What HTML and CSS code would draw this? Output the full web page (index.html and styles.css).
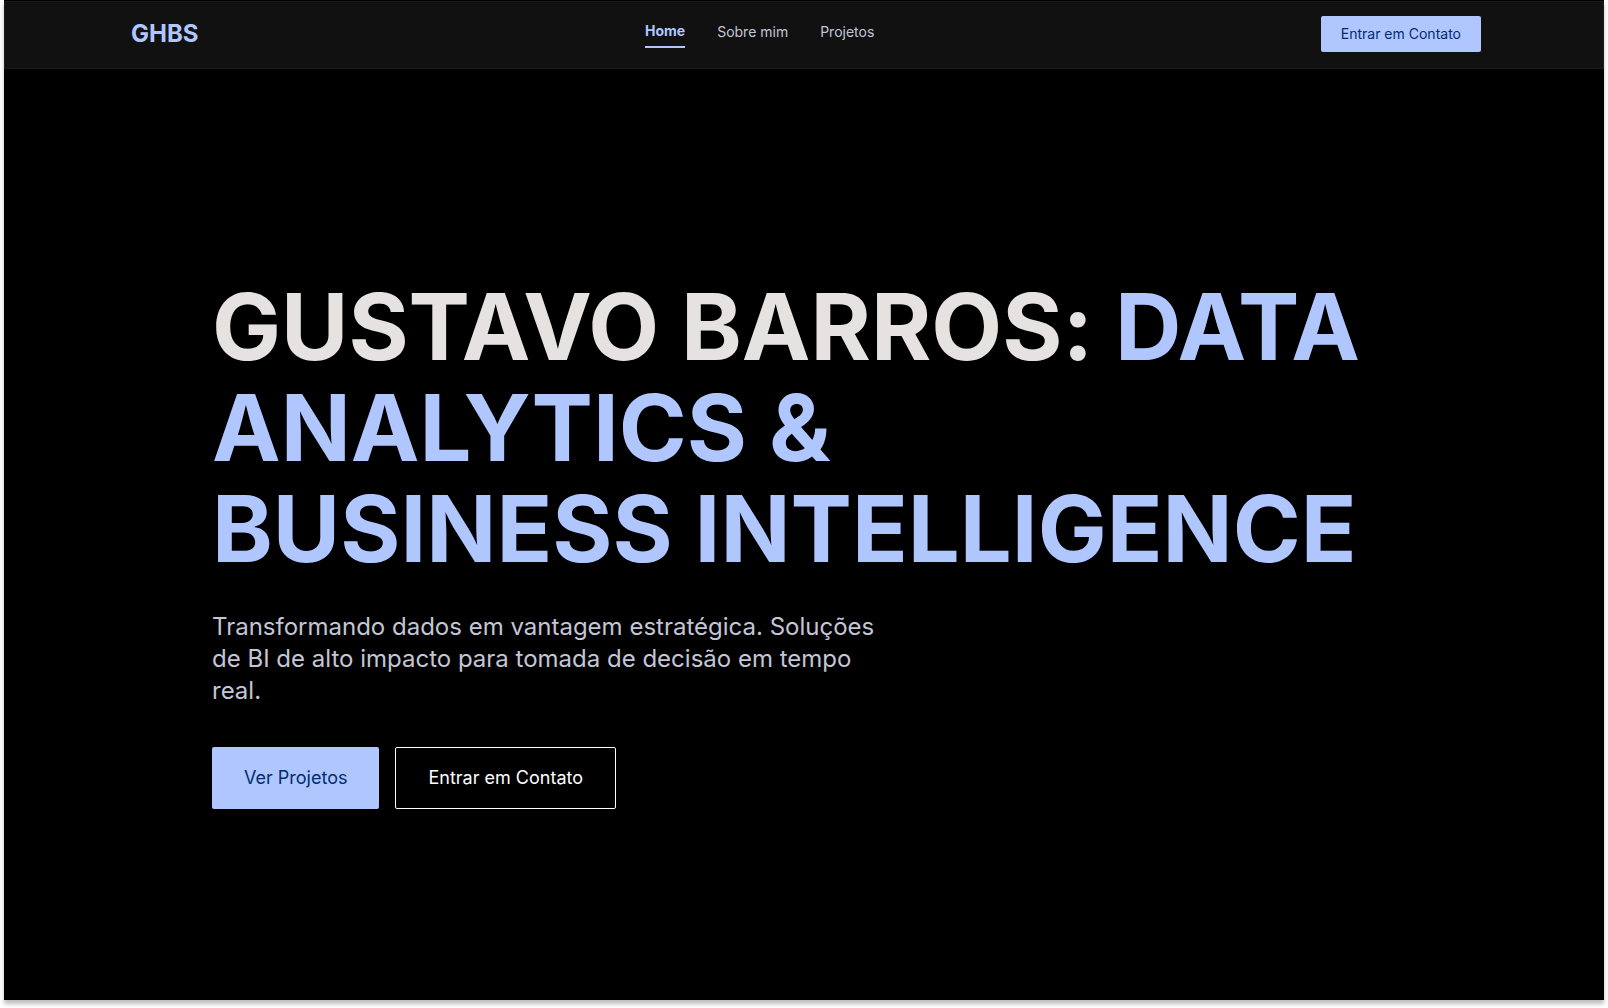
FILE: index.html
```html
<!DOCTYPE html>
<html lang="pt-BR">
<head>
    <meta charset="UTF-8">
    <meta name="viewport" content="width=device-width, initial-scale=1.0">
    <title>GHBS - Gustavo Barros</title>
    <link rel="stylesheet" href="styles.css">
</head>
<body>
    <div class="page">
        <!-- Header -->
        <header class="header">
            <a class="logo" href="#home">GHBS</a>
            <nav class="nav">
                <a class="active" href="#home">Home</a>
                <a href="#sobre">Sobre mim</a>
                <a href="#projetos">Projetos</a>
            </nav>
            <button class="btn btn-small" type="button">Entrar em Contato</button>
        </header>

        <!-- Hero -->
        <main class="hero" id="home">
            <h1>GUSTAVO BARROS: <span>DATA<br>ANALYTICS &amp;<br>BUSINESS INTELLIGENCE</span></h1>
            <p>Transformando dados em vantagem estratégica. Soluções de BI de alto impacto para tomada de decisão em tempo real.</p>
            <div class="actions">
                <button class="btn" type="button">Ver Projetos</button>
                <button class="btn btn-outline" type="button">Entrar em Contato</button>
            </div>
        </main>
    </div>
</body>
</html>
```
FILE: styles.css
```css
* {
    box-sizing: border-box;
}

body {
    font-family: Inter, "Liberation Sans", sans-serif;
    margin: 0;
    padding: 0 4px 8px;
    min-height: 100vh;
    display: flex;
    background-color: #fff;
    color: #e5e2e1;
}

.page {
    flex: 1;
    display: flex;
    flex-direction: column;
    padding-top: 1px;
    background-color: #000;
    box-shadow: 0 4px 4px rgba(0, 0, 0, 0.25);
}

/* Header */
.header {
    display: flex;
    justify-content: space-between;
    align-items: flex-start;
    padding: 14px 122px 16px 126px;
    background-color: #111;
    border: 1px solid #1a1a1a;
}

.logo {
    color: #b0c6ff;
    font-size: 24px;
    font-weight: 700;
    line-height: 36px;
    text-decoration: none;
}

.nav {
    display: flex;
    gap: 32px;
}

.nav a {
    color: #c3c6d6;
    font-size: 14px;
    line-height: 32px;
    text-decoration: none;
}

.nav .active {
    color: #b0c6ff;
    font-weight: 700;
    line-height: 30px;
    border-bottom: 2px solid #b0c6ff;
}

/* Buttons */
.btn {
    padding: 16px 32px;
    font-family: inherit;
    font-size: 18px;
    line-height: 28px;
    color: #002d6f;
    background-color: #b0c6ff;
    border: none;
    border-radius: 2px;
    cursor: pointer;
}

.btn-small {
    padding: 9px 20px;
    font-size: 14px;
    line-height: 18px;
}

.btn-outline {
    color: #fff;
    background-color: transparent;
    border: 1px solid #fff;
}

/* Hero */
.hero {
    flex: 1;
    display: flex;
    flex-direction: column;
    justify-content: center;
    padding: 16px 208px 0;
}

h1 {
    margin: 0 0 32px;
    font-size: 92px;
    font-weight: 700;
    font-variant-ligatures: no-contextual;
    line-height: 101px;
}

h1 span {
    color: #b0c6ff;
}

.hero p {
    max-width: 672px;
    margin: 0 0 40px;
    color: #c3c6d6;
    font-size: 24px;
    line-height: 32px;
}

.actions {
    display: flex;
    gap: 16px;
}
```
